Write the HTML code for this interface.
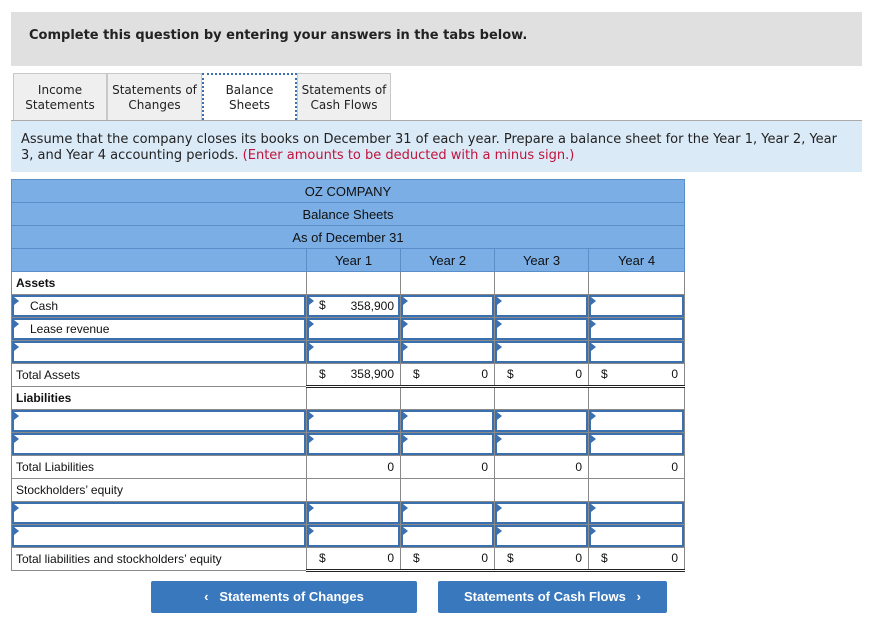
<!DOCTYPE html>
<html><head><meta charset="utf-8"><style>
body{margin:0;width:876px;height:622px;background:#fff;font-family:"Liberation Sans",Arial,sans-serif;position:relative;overflow:hidden}
.top{position:absolute;left:11px;top:12px;width:851px;height:54px;background:#e0e0e0}
.top b{position:absolute;left:18px;top:16px;font-family:"DejaVu Sans",sans-serif;font-size:13px;color:#222}
.tab{position:absolute;top:73px;height:47px;background:#efefef;border:1px solid #c8c8c8;border-bottom:none;font-family:"DejaVu Sans",sans-serif;font-size:12px;text-align:center;line-height:15px;box-sizing:border-box;padding-top:9px;color:#222}
.tab.act{background:#fff;border:2px dotted #3a6fb0;border-bottom:none;padding-top:8px}
.info{position:absolute;left:11px;top:120px;width:851px;height:52px;background:#dbeaf7;border-top:1px solid #aaa;box-sizing:border-box;padding:11px 10px;font-family:"DejaVu Sans",sans-serif;font-size:13px;line-height:16px;color:#222}
.info span{color:#c0143c}
table{position:absolute;left:11px;top:179px;border-collapse:collapse;font-size:12px;color:#111}
td{border:1px solid #8a8a8a;height:23px;padding:0;position:relative;box-sizing:border-box;line-height:21px}
.h td{background:#7aaee4;text-align:center;border-color:#5a8ec8;font-size:13px}
.in{position:absolute;left:0;top:0;right:0;bottom:0;border:2px solid #3a6fb0}
.in:before{content:"";position:absolute;left:0;top:0;border-top:4px solid transparent;border-bottom:4px solid transparent;border-left:5px solid #3a6fb0}
.lbl{padding-left:4px}
.ind{padding-left:18px}
.num{text-align:right;padding-right:6px}
.d{position:absolute;left:12px;top:0}
.tot td.v{border-bottom:3px double #222}
.btn{position:absolute;top:581px;height:32px;background:#3a78bd;color:#fff;font-weight:bold;font-size:13px;line-height:32px;text-align:center;border-radius:2px}
</style></head><body>
<div class="top"><b>Complete this question by entering your answers in the tabs below.</b></div>
<div class="tab" style="left:13px;width:94px">Income<br>Statements</div>
<div class="tab" style="left:107px;width:95px">Statements of<br>Changes</div>
<div class="tab act" style="left:202px;width:95px">Balance<br>Sheets</div>
<div class="tab" style="left:297px;width:94px">Statements of<br>Cash Flows</div>
<div class="info">Assume that the company closes its books on December 31 of each year. Prepare a balance sheet for the Year 1, Year 2, Year 3, and Year 4 accounting periods. <span>(Enter amounts to be deducted with a minus sign.)</span></div>
<table>
<colgroup><col style="width:295px"><col style="width:94px"><col style="width:94px"><col style="width:94px"><col style="width:96px"></colgroup>
<tr class="h"><td colspan="5">OZ COMPANY</td></tr>
<tr class="h"><td colspan="5">Balance Sheets</td></tr>
<tr class="h"><td colspan="5">As of December 31</td></tr>
<tr class="h"><td></td><td>Year 1</td><td>Year 2</td><td>Year 3</td><td>Year 4</td></tr>
<tr><td class="lbl"><b>Assets</b></td><td></td><td></td><td></td><td></td></tr>
<tr><td class="ind"><div class="in"></div><span style="position:relative">Cash</span></td><td class="num"><div class="in"></div><span class="d">$</span><span style="position:relative">358,900</span></td><td><div class="in"></div></td><td><div class="in"></div></td><td><div class="in"></div></td></tr>
<tr><td class="ind"><div class="in"></div><span style="position:relative">Lease revenue</span></td><td><div class="in"></div></td><td><div class="in"></div></td><td><div class="in"></div></td><td><div class="in"></div></td></tr>
<tr><td><div class="in"></div></td><td><div class="in"></div></td><td><div class="in"></div></td><td><div class="in"></div></td><td><div class="in"></div></td></tr>
<tr class="tot"><td class="lbl">Total Assets</td><td class="num v"><span class="d">$</span>358,900</td><td class="num v"><span class="d">$</span>0</td><td class="num v"><span class="d">$</span>0</td><td class="num v"><span class="d">$</span>0</td></tr>
<tr><td class="lbl"><b>Liabilities</b></td><td></td><td></td><td></td><td></td></tr>
<tr><td><div class="in"></div></td><td><div class="in"></div></td><td><div class="in"></div></td><td><div class="in"></div></td><td><div class="in"></div></td></tr>
<tr><td><div class="in"></div></td><td><div class="in"></div></td><td><div class="in"></div></td><td><div class="in"></div></td><td><div class="in"></div></td></tr>
<tr><td class="lbl">Total Liabilities</td><td class="num">0</td><td class="num">0</td><td class="num">0</td><td class="num">0</td></tr>
<tr><td class="lbl">Stockholders’ equity</td><td></td><td></td><td></td><td></td></tr>
<tr><td><div class="in"></div></td><td><div class="in"></div></td><td><div class="in"></div></td><td><div class="in"></div></td><td><div class="in"></div></td></tr>
<tr><td><div class="in"></div></td><td><div class="in"></div></td><td><div class="in"></div></td><td><div class="in"></div></td><td><div class="in"></div></td></tr>
<tr class="tot"><td class="lbl">Total liabilities and stockholders’ equity</td><td class="num v"><span class="d">$</span>0</td><td class="num v"><span class="d">$</span>0</td><td class="num v"><span class="d">$</span>0</td><td class="num v"><span class="d">$</span>0</td></tr>
</table>
<div class="btn" style="left:151px;width:266px">&lsaquo;&nbsp;&nbsp; Statements of Changes</div>
<div class="btn" style="left:438px;width:229px">Statements of Cash Flows &nbsp;&nbsp;&rsaquo;</div>
</body></html>
